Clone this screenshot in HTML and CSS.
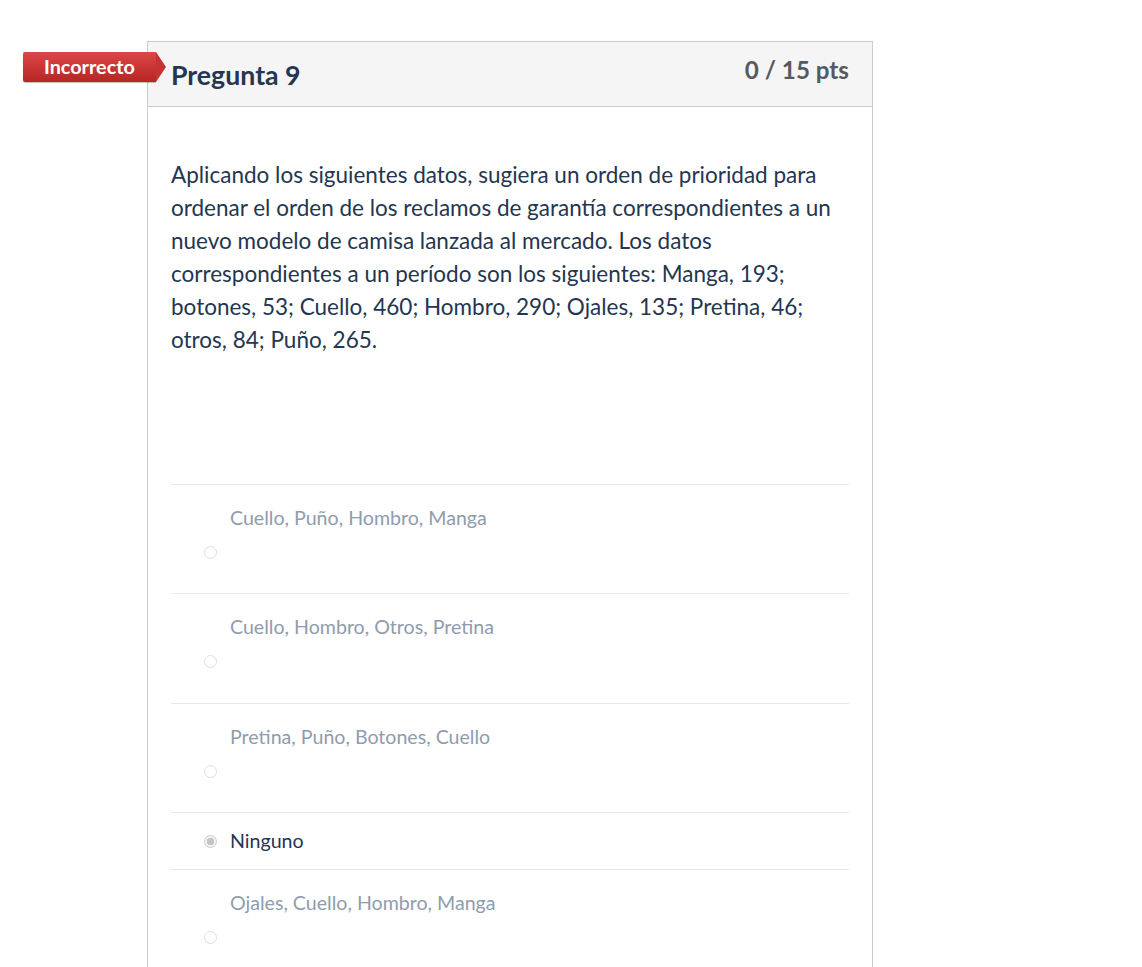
FILE: index.html
```html
<!DOCTYPE html>
<html lang="es">
<head>
<meta charset="utf-8">
<link rel="stylesheet" href="styles.css">
</head>
<body>
<div class="wrap">
  <div class="badge">Incorrecto</div>
  <div class="card">
    <div class="header">
      <h2 class="title">Pregunta 9</h2>
      <div class="pts">0 / 15 pts</div>
    </div>
    <div class="content">
      <p class="question">Aplicando los siguientes datos, sugiera un orden de prioridad para ordenar el orden de los reclamos de garantía correspondientes a un nuevo modelo de camisa lanzada al mercado. Los datos correspondientes a un período son los siguientes: Manga, 193; botones, 53; Cuello, 460; Hombro, 290; Ojales, 135; Pretina, 46; otros, 84; Puño, 265.</p>
      <div class="answers">
        <div class="answer tall">
          <div class="label">Cuello, Puño, Hombro, Manga</div>
          <span class="radio"></span>
        </div>
        <div class="answer tall">
          <div class="label">Cuello, Hombro, Otros, Pretina</div>
          <span class="radio"></span>
        </div>
        <div class="answer tall">
          <div class="label">Pretina, Puño, Botones, Cuello</div>
          <span class="radio"></span>
        </div>
        <div class="answer selected">
          <span class="radio checked"></span>
          <div class="label">Ninguno</div>
        </div>
        <div class="answer tall">
          <div class="label">Ojales, Cuello, Hombro, Manga</div>
          <span class="radio"></span>
        </div>
      </div>
    </div>
  </div>
</div>
</body>
</html>
```
FILE: styles.css
```css
html, body {
  margin: 0;
  padding: 0;
  background: #fff;
  font-family: Lato, "Open Sans", sans-serif;
  color: #243650;
}
.wrap {
  position: relative;
  padding: 41px 0 0 147px;
}
.card {
  width: 726px;
  border: 1px solid #c7cdd1;
  border-bottom: none;
  min-height: 930px;
  box-sizing: border-box;
}
.header {
  background: #f5f5f5;
  border-bottom: 1px solid #c7cdd1;
  height: 65px;
  box-sizing: border-box;
  display: flex;
  justify-content: space-between;
  align-items: flex-start;
  padding: 0 23px 0 23px;
}
.title {
  margin: 17px 0 0;
  font-size: 26.7px;
  font-weight: 700;
  color: #243650;
  line-height: 32px;
}
.pts {
  margin-top: 12px;
  font-size: 24.2px;
  font-weight: 700;
  color: #555a60;
  line-height: 32px;
}
.badge {
  position: absolute;
  left: 23px;
  top: 52px;
  height: 30px;
  width: 133px;
  box-sizing: border-box;
  background: linear-gradient(#dc4646, #b72525);
  color: #fff;
  font-weight: 700;
  font-size: 19.8px;
  line-height: 28px;
  padding-left: 21px;
  border-radius: 2px 0 0 2px;
  box-shadow: 0 1px 1px rgba(0,0,0,0.25);
}
.badge::after {
  content: "";
  position: absolute;
  right: -10px;
  top: 0;
  border-top: 15px solid transparent;
  border-bottom: 15px solid transparent;
  border-left: 10px solid #c73333;
}
.content {
  padding: 51px 23px 0 23px;
}
.question {
  margin: 0;
  font-size: 22.5px;
  line-height: 33px;
  color: #243650;
  padding-bottom: 128px;
}
.answers {
  border-top: 1px solid #e6e9eb;
}
.answer {
  position: relative;
  border-bottom: 1px solid #e6e9eb;
  padding-left: 59px;
  font-size: 19.6px;
  line-height: 24px;
}
.answer.tall {
  height: 109.34px;
  box-sizing: border-box;
  padding-top: 21px;
}
.answer.tall .label {
  color: #8f9cae;
}
.answer.tall .radio {
  position: absolute;
  left: 33px;
  top: 61px;
}
.answer.selected {
  height: 57px;
  box-sizing: border-box;
  display: flex;
  align-items: center;
  padding-left: 33px;
  padding-top: 1px;
  gap: 13px;
}
.answer.selected .label {
  color: #243650;
}
.radio {
  display: inline-block;
  width: 13px;
  height: 13px;
  border-radius: 50%;
  border: 1px solid #dcdfe2;
  box-sizing: border-box;
  background: #fff;
  flex: none;
}
.radio.checked {
  border: 1px solid #c9cbcd;
  background: radial-gradient(circle, #c4c4c4 0 3.5px, #f4f4f4 4px);
}
```
